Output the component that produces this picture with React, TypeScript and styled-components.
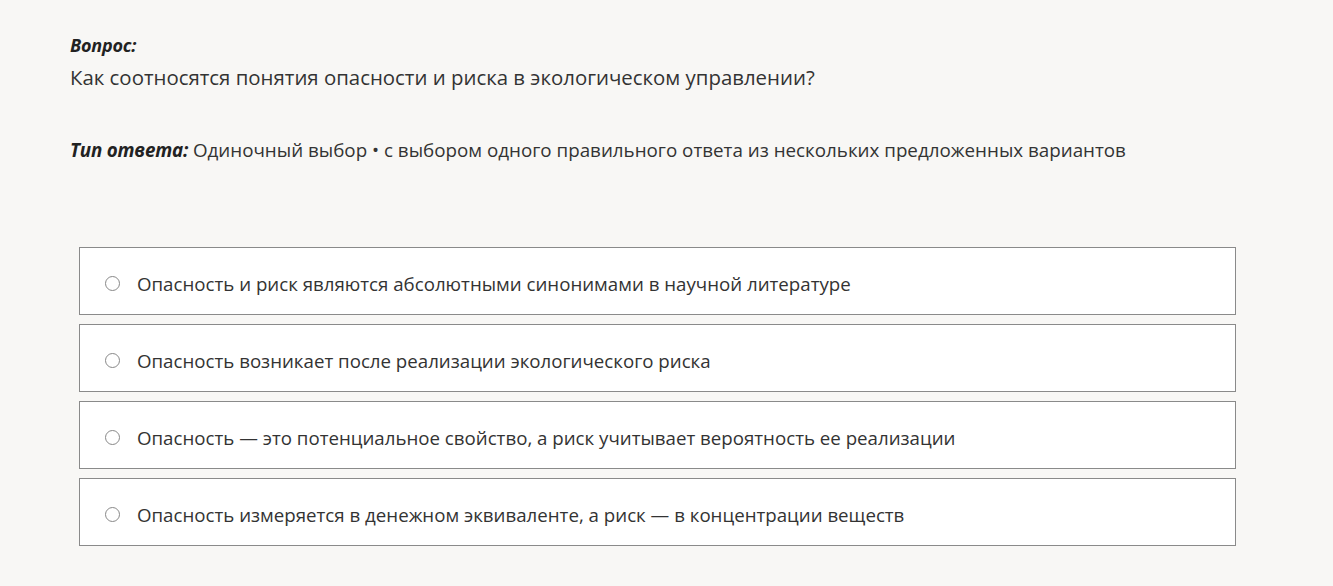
import styled, { createGlobalStyle } from "styled-components";

const GlobalStyle = createGlobalStyle`
  html, body {
    margin: 0;
    padding: 0;
    background: #f8f7f5;
  }
  body {
    font-family: "Open Sans", "Noto Sans", sans-serif;
    color: #333;
  }
`;

const options = [
  "Опасность и риск являются абсолютными синонимами в научной литературе",
  "Опасность возникает после реализации экологического риска",
  "Опасность — это потенциальное свойство, а риск учитывает вероятность ее реализации",
  "Опасность измеряется в денежном эквиваленте, а риск — в концентрации веществ",
];

export default function App() {
  return (
    <>
      <GlobalStyle />
      <Page>
        <Label>Вопрос:</Label>
        <Question>Как соотносятся понятия опасности и риска в экологическом управлении?</Question>
        <AnswerType>
          <em>Тип ответа:</em> Одиночный выбор • с выбором одного правильного ответа из нескольких предложенных вариантов
        </AnswerType>
        <Options>
          {options.map((o) => (
            <Option key={o}>
              <Radio />
              <span>{o}</span>
            </Option>
          ))}
        </Options>
      </Page>
    </>
  );
}

const Page = styled.div`
  padding: 33px 0 0 70px;
  width: 1166px;
`;

const Label = styled.div`
  font-size: 18px;
  font-weight: 700;
  font-style: italic;
  line-height: 24px;
  color: #222;
  letter-spacing: -0.2px;
`;

const Question = styled.div`
  font-size: 20.4px;
  line-height: 30px;
  margin-top: 5px;
`;

const AnswerType = styled.div`
  margin-top: 45px;
  font-size: 18.8px;
  line-height: 26px;
  em {
    font-weight: 700;
    color: #222;
    letter-spacing: -0.2px;
  }
`;

const Options = styled.div`
  margin-top: 84px;
  margin-left: 9px;
  display: flex;
  flex-direction: column;
  gap: 9px;
`;

const Option = styled.label`
  display: flex;
  align-items: center;
  gap: 17px;
  padding: 5px 26px 0 25px;
  box-sizing: border-box;
  height: 68px;
  background: #fff;
  border: 1px solid #8a8a8a;
  font-size: 18.7px;
  color: #333;
  cursor: pointer;
`;

const Radio = styled.span`
  width: 13px;
  height: 13px;
  border: 1px solid #888;
  border-radius: 50%;
  flex-shrink: 0;
`;
